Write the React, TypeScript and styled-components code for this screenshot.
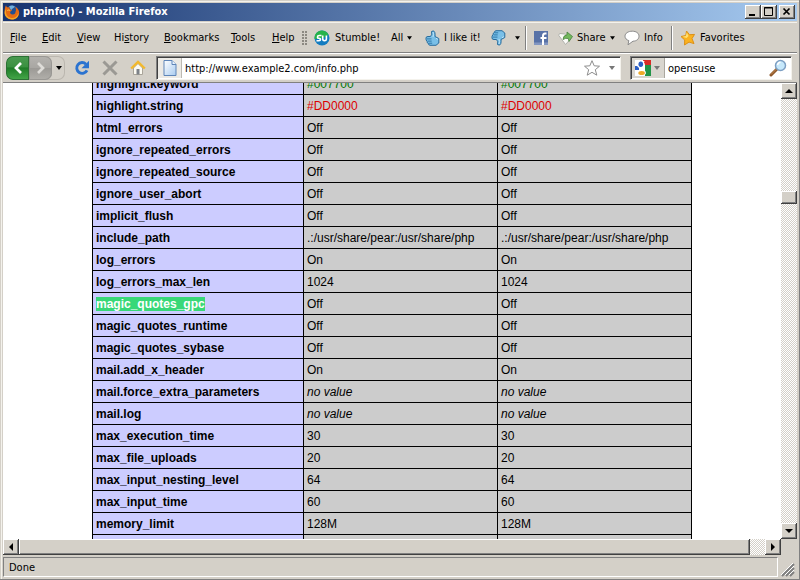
import React, { useLayoutEffect, useRef } from "react";
import styled, { createGlobalStyle, css } from "styled-components";

const ui = `"DejaVu Sans Condensed", "DejaVu Sans", sans-serif`;

const GlobalStyle = createGlobalStyle`
  * { box-sizing: border-box; }
  body { margin: 0; background: #d4d0c8; }
  button, input {
    margin: 0; padding: 0; border: 0; background: none; border-radius: 0;
    color: inherit; font: inherit; outline: 0;
  }
  svg { display: block; flex: none; }
`;

const raised = css`
  background: #d4d0c8;
  box-shadow: inset -1px -1px #404040, inset 1px 1px #fff, inset -2px -2px #808080;
`;

const Window = styled.div`
  height: 100vh;
  display: flex;
  flex-direction: column;
  padding: 3px;
  background: #d4d0c8;
  box-shadow: inset -1px -1px #808080, inset 1px 1px #d4d0c8, inset 2px 2px #f4f2ec;
  font: 11px/14px ${ui};
  color: #000;
`;

const TitleBar = styled.header`
  flex: none;
  display: flex;
  align-items: center;
  height: 18px;
  padding: 0 2px 0 1px;
  gap: 3px;
  color: #fff;
  background: linear-gradient(90deg, #16336f, #a6caf0);
`;

const Title = styled.h1`
  flex: 1;
  margin: 0;
  font: bold 11px/14px ${ui};
`;

const WindowButtons = styled.div`
  display: flex;
`;

const WindowButton = styled.button<{ $apart?: boolean }>`
  ${raised}
  display: grid;
  place-items: center;
  width: 16px;
  height: 14px;
  margin-left: ${(p) => (p.$apart ? 2 : 0)}px;
  color: #000;
`;

const MenuRow = styled.div`
  flex: none;
  display: flex;
  align-items: center;
  height: 32px;
  padding-top: 2px;
  border-top: 1px solid #d4d0c8;
  border-bottom: 1px solid #808080;
  box-shadow: inset 0 1px #f4f2ec;
  overflow: hidden;
`;

const Menu = styled.nav`
  display: flex;
  flex: none;
`;

const MenuItem = styled.button<{ $width: number }>`
  flex: none;
  width: ${(p) => p.$width}px;
  height: 24px;
  padding-left: 7px;
  text-align: left;
  white-space: nowrap;
`;

const Tool = styled.button<{ $width: number }>`
  flex: none;
  display: flex;
  align-items: center;
  gap: 4px;
  width: ${(p) => p.$width}px;
  height: 24px;
  white-space: nowrap;
`;

const Gripper = styled.span`
  flex: none;
  width: 6px;
  height: 15px;
  margin: 0 6px;
  background: radial-gradient(circle at 1px 1px, #8c8982 1px, transparent 1px) 0 0 / 3px 3px;
`;

const Divider = styled.span`
  flex: none;
  width: 2px;
  height: 24px;
  margin-right: 7px;
  border-left: 1px solid #808080;
  border-right: 1px solid #fff;
`;

const NavRow = styled.div`
  flex: none;
  display: flex;
  align-items: center;
  height: 30px;
  padding: 0 5px 0 3px;
  border-top: 1px solid #fff;
  border-bottom: 1px solid #808080;
`;

const History = styled.div`
  flex: none;
  display: flex;
  width: 59px;
  height: 24px;
  margin-right: 3px;
  border-radius: 7px;
  overflow: hidden;
  box-shadow: inset 0 0 0 1px #bbb7af;
`;

const HistoryButton = styled.button<{ $kind: "back" | "forward" | "recent" }>`
  display: grid;
  place-items: center;
  width: ${(p) => (p.$kind === "recent" ? 13 : 23)}px;
  flex: ${(p) => (p.$kind === "recent" ? 1 : "none")};
  ${(p) =>
    p.$kind === "back" &&
    css`
      background: linear-gradient(#4c9a50, #3a9140 45%, #1f7c27 50%, #46a94b);
      box-shadow: inset 0 0 0 1px #2c7034;
      border-radius: 7px 0 0 7px;
    `}
  ${(p) =>
    p.$kind === "forward" &&
    css`
      background: linear-gradient(#b5b3af, #a9a7a3 48%, #9c9a96 52%, #b2b0ab);
      box-shadow: inset 0 0 0 1px #999793;
      border-radius: 0 7px 7px 0;
    `}
`;

const IconButton = styled.button`
  flex: none;
  display: grid;
  place-items: center;
  width: 28px;
  height: 24px;
`;

const sunken = css`
  background: #fff;
  border: 1px solid;
  border-color: #808080 #f4f2ec #f4f2ec #808080;
  box-shadow: inset 1px 1px #404040;
`;

const AddressBox = styled.form`
  ${sunken}
  flex: 1;
  display: flex;
  align-items: center;
  height: 24px;
  min-width: 0;
  margin: 0 9px 0 4px;
`;

const SiteIcon = styled.span`
  flex: none;
  display: grid;
  place-items: center;
  width: 24px;
  height: 20px;
  margin-left: 1px;
  background: #eceae5;
  border-right: 1px solid #bcb9b2;
`;

const AddressInput = styled.input`
  flex: 1;
  min-width: 0;
  height: 18px;
  padding-left: 3px;
  background: #fff;
`;

const SearchBox = styled.form`
  ${sunken}
  flex: none;
  display: flex;
  align-items: center;
  width: 162px;
  height: 24px;
  padding-right: 1px;
`;

const EngineButton = styled.button`
  flex: none;
  display: flex;
  align-items: center;
  gap: 3px;
  width: 33px;
  height: 20px;
  margin-left: 1px;
  padding-left: 3px;
  background: #d9d6cf;
  border-right: 1px solid #aaa79f;
`;

const PlainButton = styled.button<{ $wide?: boolean }>`
  flex: none;
  display: grid;
  place-items: center;
  width: ${(p) => (p.$wide ? 24 : 16)}px;
  height: 20px;
`;

const Body = styled.div`
  flex: 1;
  min-height: 0;
  display: grid;
  grid-template: minmax(0, 1fr) 16px / minmax(0, 1fr) 16px;
`;

const Page = styled.main`
  overflow: hidden;
  background: #fff;
`;

const Settings = styled.table`
  width: 600px;
  margin: 0 auto;
  border-collapse: collapse;
  table-layout: fixed;
  font: 12px/16px "Liberation Sans", Arial, sans-serif;
  color: #000;

  th, td {
    height: 22px;
    padding: 3px 3px 2px;
    border: 1px solid #000;
    text-align: left;
    vertical-align: baseline;
    white-space: nowrap;
  }
  th { background: #ccccff; font-weight: bold; }
  td { background: #cccccc; }
`;

const Value = styled.td<{ $tone?: string }>`
  color: ${(p) => p.$tone ?? "#000"};
`;

const Found = styled.mark`
  background: #38d878;
  color: #fff;
`;

const Bar = styled.div<{ $vertical?: boolean }>`
  display: flex;
  flex-direction: ${(p) => (p.$vertical ? "column" : "row")};
  background: repeating-conic-gradient(#d4d0c8 0 25%, #fff 0 50%) 0 0 / 2px 2px;
`;

const Arrow = styled.button`
  ${raised}
  flex: none;
  display: grid;
  place-items: center;
  width: 16px;
  height: 16px;
`;

const Gap = styled.span<{ $grow: number }>`
  flex: ${(p) => p.$grow} 1 0;
`;

const Thumb = styled.span<{ $grow?: number }>`
  ${raised}
  flex: ${(p) => (p.$grow ? `${p.$grow} 1 0` : "0 0 13px")};
`;

const StatusBar = styled.footer`
  flex: none;
  display: flex;
  gap: 3px;
  height: 22px;
  padding-top: 2px;
`;

const StatusText = styled.div`
  flex: 1;
  padding: 3px 5px 0;
  border: 1px solid;
  border-color: #808080 #fff #fff #808080;
`;

const Grip = styled.span`
  display: flex;
  align-items: flex-end;
  width: 16px;
`;

const Down = ({ color = "#000", size = 5 }: { color?: string; size?: number }) => (
  <svg width={size} height="4" viewBox="0 0 6 4"><path d="M0 0h6L3 4z" fill={color} /></svg>
);

const scrollPaths = { up: "M0 6l4-4 4 4z", down: "M0 2h8L4 6z", left: "M6 0v8L2 4z", right: "M2 0v8l4-4z" };
const ScrollArrow = ({ to }: { to: keyof typeof scrollPaths }) => (
  <Arrow aria-label={`Scroll ${to}`}>
    <svg width="8" height="8" viewBox="0 0 8 8"><path d={scrollPaths[to]} /></svg>
  </Arrow>
);

const FirefoxIcon = () => (
  <svg width="16" height="16" viewBox="0 0 16 16">
    <circle cx="8" cy="8" r="6.7" fill="#234f91" />
    <path d="M5 2.500c2-1.500 5-1 6 .5-1 .2-1 1-2 1.300-1 .5-1 1.700-2 1.700z" fill="#6fb0dd" />
    <path d="M2 1.200c.2 1 .6 1.700 1.300 2.300 1-.4 2-.2 2.700.3-.7.7-.6 1.400.2 1.700l1.800.4c-.3 1-1.300 1.100-1.800 1.900-.5 1.700 1 3 2.800 2.700 1.500-.2 2.500-1.200 2.500-2.600 1-1.700.5-3.900-.6-5.200 2.600 1 4.400 3.700 4.300 6.100-.3 3.900-3.200 6.700-7.200 6.700S.6 12.500.5 8.500C.5 5.500 1 3.200 2 1.200z" fill="#e66a13" />
    <path d="M2.200 5c-1 4.500.8 8.300 5 9 3.600.4 6.300-1.600 7.200-5 .5 4-2.200 6.500-6.400 6.500S.7 12.500.7 9c0-2 .6-3.200 1.500-4z" fill="#f5a623" />
    <path d="M3.300 6.500c1-.8 1.600-.4 2.700-.1" stroke="#ffcc4d" fill="none" />
  </svg>
);

const StumbleIcon = () => (
  <svg width="17" height="16" viewBox="0 0 17 16">
    <circle cx="8" cy="8" r="7.500" fill="#137cc0" />
    <path d="M.6 9A7.500 7.500 0 0 1 12.500 2L14.500 4.500Q10 9 .6 9z" fill="#26b34a" />
    <path d="M7.500 5.500H5.200Q3.500 5.500 3.500 7T5 8.300Q6.500 8.300 6.500 9.500T5 10.700H2.500M8.700 5.500v3.600q0 1.600 1.800 1.600t1.900-1.600V5.500" fill="none" stroke="#fff" strokeWidth="1.600" />
  </svg>
);

const ThumbIcon = ({ down = false }: { down?: boolean }) => (
  <svg width="15" height="16" viewBox="0 0 15 16">
    <g transform={down ? "matrix(1 0 0 -1 0 16)" : undefined} strokeLinejoin="round">
      <path d="M1 8q0-1.500 2-1.500h2.500Q7.500 4.500 6.500 1.500 9-.2 9.800 2.500q.5 2 .2 4l3.800 2V13L11 15.300H5Q3.200 15 3.500 13.500 1.800 13.200 2.200 11.700.6 10 1 8z" fill="#79bfe7" stroke="#286c9d" />
      <path d="M2 8.900h4.500M2.700 11.100h4M3.700 13.200h3.500" stroke="#2e78aa" />
      <path d="M8 2q1 2.500 0 5M11 8.200l1.800 1.200" fill="none" stroke="#c1e6f8" />
    </g>
  </svg>
);

const FacebookIcon = () => (
  <svg width="14" height="14" viewBox="0 0 14 14">
    <path d="M0 0h14v14H0z" fill="#5872a7" />
    <path d="M0 11.500h14V14H0z" fill="#8296c1" />
    <path d="M12.500 2.500H11Q9 2.500 9 5v9M6.500 7h6" stroke="#fff" strokeWidth="2" fill="none" />
  </svg>
);

const ShareIcon = () => (
  <svg width="15" height="15" viewBox="0 0 15 15">
    <path d="M.8 4.500Q.5 3 2 2.500L6.500 3 13 7.500 7.500 13.500z" fill="#fafaf7" stroke="#b1b2ad" />
    <path d="M5 8.500Q5 4.500 9 3.800V1L14.500 5.500 11 10.500 10.300 7.500Q7.500 6.800 5 8.500z" fill="#73b85d" stroke="#48813f" strokeWidth=".8" />
  </svg>
);

const BubbleIcon = () => (
  <svg width="16" height="16" viewBox="0 0 16 16">
    <path d="M8.300 1.200c4 0 6.700 2 6.700 5s-2.700 5-6 5L4 14.800l.8-4.200C2.500 9.800 1 8.400 1 6.200c0-3 3.200-5 7.300-5z" fill="#fff" stroke="#8a8a8a" />
  </svg>
);

const StarIcon = ({ outline = false }: { outline?: boolean }) => (
  <svg width="16" height="16" viewBox="0 0 16 16">
    <path
      d={outline ? "M8 .7l2.200 5.100 5.300.4-4.200 3.500 1.500 5.500L8 12.300l-4.800 2.900 1.500-5.500L.5 6.200l5.300-.4z" : "M6.500 1l3 3.700 5-.3-2.500 4.200 2 5-5-1.500L4.500 15l.2-5L1 6.500l4.800-1z"}
      fill={outline ? "#fff" : "#fbb21f"}
      stroke={outline ? "#8d8d8d" : "#dc9118"}
      strokeLinejoin="round"
    />
    {!outline && <path d="M6.800 2.500L8.500 6l-2 2-4-1.300 3.300-.8z" fill="#ffe173" />}
  </svg>
);

const Chevron = ({ forward = false }: { forward?: boolean }) => (
  <svg width="12" height="12" viewBox="0 0 12 12">
    <path d={forward ? "M3 1l5 5-5 5" : "M9 1L4 6l5 5"} fill="none" stroke={forward ? "#dedcd8" : "#fff"} strokeWidth="2.700" />
  </svg>
);

const ReloadIcon = () => (
  <svg width="16" height="16" viewBox="0 0 16 16">
    <path d="M12 4.200A5.400 5.400 0 1 0 13 10.300" fill="none" stroke="#2b73d0" strokeWidth="2.900" />
    <path d="M15 .8v7.500H7.500z" fill="#2b73d0" />
  </svg>
);

const StopIcon = () => (
  <svg width="16" height="16" viewBox="0 0 16 16">
    <path d="M1.500 1.500l13 13M14.500 1.500l-13 13" stroke="#9b9994" strokeWidth="3" />
  </svg>
);

const HomeIcon = () => (
  <svg width="16" height="16" viewBox="0 0 16 16">
    <path d="M3.500 8v6.500h9V8L8 3.500z" fill="#fcfaf2" stroke="#aaa59a" />
    <path d="M6.500 9h3v5.500h-3z" fill="#7d8289" />
    <path d="M1.200 8.500L8 2l6.800 6.500" fill="none" stroke="#f2b92d" strokeWidth="2.400" />
  </svg>
);

const DocumentIcon = () => (
  <svg width="14" height="16" viewBox="0 0 14 16">
    <defs><linearGradient id="doc" x2="1" y2="1"><stop stopColor="#fff" /><stop offset="1" stopColor="#a8cbf0" /></linearGradient></defs>
    <path d="M1 .5h8l4 4v11H1z" fill="url(#doc)" stroke="#5e85b8" />
    <path d="M9 .5v4h4" fill="#e8f3ff" stroke="#5e85b8" />
  </svg>
);

const GoogleIcon = () => (
  <svg width="16" height="16" viewBox="0 0 16 16">
    <path d="M0 0h16v16H0z" fill="#fff" />
    <path d="M8 0h8v5H9z" fill="#d92c26" />
    <path d="M10 5h6v11h-6z" fill="#239447" />
    <path d="M0 6h4v4H0z" fill="#2c5fc4" />
    <path d="M9.500 1H6Q2 1 2 4.500T6 8q-1.500 1 .2 2.300Q4 10.500 3 12t1 3.200q6 1 7-2 .2-2.200-2.500-3.700Q7.500 8.700 9 7.700 11 5 9 2.500z" fill="#fff" />
    <ellipse cx="5.800" cy="4.200" rx="2.300" ry="2.700" fill="#2c5fc4" />
    <ellipse cx="6.600" cy="12.900" rx="3.300" ry="2" fill="#efaa27" />
  </svg>
);

const SearchIcon = () => (
  <svg width="18" height="18" viewBox="0 0 18 18">
    <path d="M8 10l-6 6" stroke="#8d572b" strokeWidth="3" strokeLinecap="round" />
    <path d="M7.500 10l-5.500 5.500" stroke="#c48a4e" />
    <circle cx="11.500" cy="6.500" r="5" fill="#c6e8fb" stroke="#7d9fc3" strokeWidth="1.500" />
    <path d="M8.500 6q.5-2.500 3-2.700" fill="none" stroke="#fff" strokeWidth="1.500" />
  </svg>
);

const menus: [string, string, string, number][] = [
  ["", "F", "ile", 32],
  ["", "E", "dit", 35],
  ["", "V", "iew", 37],
  ["Hi", "s", "tory", 50],
  ["", "B", "ookmarks", 67],
  ["", "T", "ools", 41],
  ["", "H", "elp", 31],
];

const rows: [string, string, string?][] = [
  ["highlight.keyword", "#007700", "#007700"],
  ["highlight.string", "#DD0000", "#dd0000"],
  ["html_errors", "Off"],
  ["ignore_repeated_errors", "Off"],
  ["ignore_repeated_source", "Off"],
  ["ignore_user_abort", "Off"],
  ["implicit_flush", "Off"],
  ["include_path", ".:/usr/share/pear:/usr/share/php"],
  ["log_errors", "On"],
  ["log_errors_max_len", "1024"],
  ["magic_quotes_gpc", "Off"],
  ["magic_quotes_runtime", "Off"],
  ["magic_quotes_sybase", "Off"],
  ["mail.add_x_header", "On"],
  ["mail.force_extra_parameters", ""],
  ["mail.log", ""],
  ["max_execution_time", "30"],
  ["max_file_uploads", "20"],
  ["max_input_nesting_level", "64"],
  ["max_input_time", "60"],
  ["memory_limit", "128M"],
  ["open_basedir", ""],
];

const scrolledBy = 11;

export default function App() {
  const page = useRef<HTMLElement>(null);
  useLayoutEffect(() => {
    if (page.current) page.current.scrollTop = scrolledBy;
  }, []);

  return (
    <Window>
      <GlobalStyle />
      <TitleBar>
        <FirefoxIcon />
        <Title>phpinfo() - Mozilla Firefox</Title>
        <WindowButtons>
          <WindowButton aria-label="Minimize"><svg width="10" height="10"><path d="M1 7h6v2H1z" /></svg></WindowButton>
          <WindowButton aria-label="Maximize"><svg width="10" height="10"><path d="M.5 .5h8v8h-8zM0 1h9" fill="none" stroke="#000" /></svg></WindowButton>
          <WindowButton aria-label="Close" $apart><svg width="10" height="10"><path d="M1.500 1.500l6 6M7.500 1.500l-6 6" stroke="#000" strokeWidth="1.700" /></svg></WindowButton>
        </WindowButtons>
      </TitleBar>

      <MenuRow>
        <Menu>
          {menus.map(([before, key, after, width]) => (
            <MenuItem key={after} $width={width}>{before}<u>{key}</u>{after}</MenuItem>
          ))}
        </Menu>
        <Gripper />
        <Tool $width={77}><StumbleIcon />Stumble!</Tool>
        <Tool $width={34}>All <Down /></Tool>
        <Tool $width={66}><ThumbIcon />I like it!</Tool>
        <Tool $width={24} aria-label="Not for me"><ThumbIcon down /></Tool>
        <Tool $width={10} aria-label="More ratings"><Down /></Tool>
        <Divider />
        <Tool $width={24} aria-label="Facebook"><FacebookIcon /></Tool>
        <Tool $width={66}><ShareIcon />Share <Down /></Tool>
        <Tool $width={47}><BubbleIcon />Info</Tool>
        <Divider />
        <Tool $width={70}><StarIcon />Favorites</Tool>
      </MenuRow>

      <NavRow>
        <History>
          <HistoryButton $kind="back" aria-label="Back"><Chevron /></HistoryButton>
          <HistoryButton $kind="forward" aria-label="Forward"><Chevron forward /></HistoryButton>
          <HistoryButton $kind="recent" aria-label="Recent pages"><Down size={6} /></HistoryButton>
        </History>
        <IconButton aria-label="Reload"><ReloadIcon /></IconButton>
        <IconButton aria-label="Stop"><StopIcon /></IconButton>
        <IconButton aria-label="Home"><HomeIcon /></IconButton>
        <AddressBox>
          <SiteIcon><DocumentIcon /></SiteIcon>
          <AddressInput aria-label="Address" defaultValue="http://www.example2.com/info.php" />
          <PlainButton $wide type="button" aria-label="Bookmark this page"><StarIcon outline /></PlainButton>
          <PlainButton type="button" aria-label="Show addresses"><Down color="#777" size={6} /></PlainButton>
        </AddressBox>
        <SearchBox>
          <EngineButton type="button" aria-label="Search engine"><GoogleIcon /><Down color="#777" size={6} /></EngineButton>
          <AddressInput aria-label="Search" defaultValue="opensuse" />
          <PlainButton $wide type="submit" aria-label="Search the web"><SearchIcon /></PlainButton>
        </SearchBox>
      </NavRow>

      <Body>
        <Page ref={page}>
          <Settings>
            <colgroup><col width="211" /><col width="194" /><col /></colgroup>
            <tbody>
              {rows.map(([name, value, tone]) => (
                <tr key={name}>
                  <th scope="row">{name === "magic_quotes_gpc" ? <Found>{name}</Found> : name}</th>
                  <Value $tone={tone}>{value || <i>no value</i>}</Value>
                  <Value $tone={tone}>{value || <i>no value</i>}</Value>
                </tr>
              ))}
            </tbody>
          </Settings>
        </Page>
        <Bar $vertical>
          <ScrollArrow to="up" />
          <Gap $grow={92} />
          <Thumb />
          <Gap $grow={319} />
          <ScrollArrow to="down" />
        </Bar>
        <Bar>
          <ScrollArrow to="left" />
          <Thumb $grow={731} />
          <Gap $grow={15} />
          <ScrollArrow to="right" />
        </Bar>
      </Body>

      <StatusBar>
        <StatusText>Done</StatusText>
        <Grip>
          <svg width="14" height="14" viewBox="0 0 14 14">
            <path d="M1 13L13 1M5 13l8-8M9 13l4-4" stroke="#808080" strokeWidth="2" />
            <path d="M0 12L12 0M4 12l9-9M8 12l5-5" stroke="#fff" />
          </svg>
        </Grip>
      </StatusBar>
    </Window>
  );
}
